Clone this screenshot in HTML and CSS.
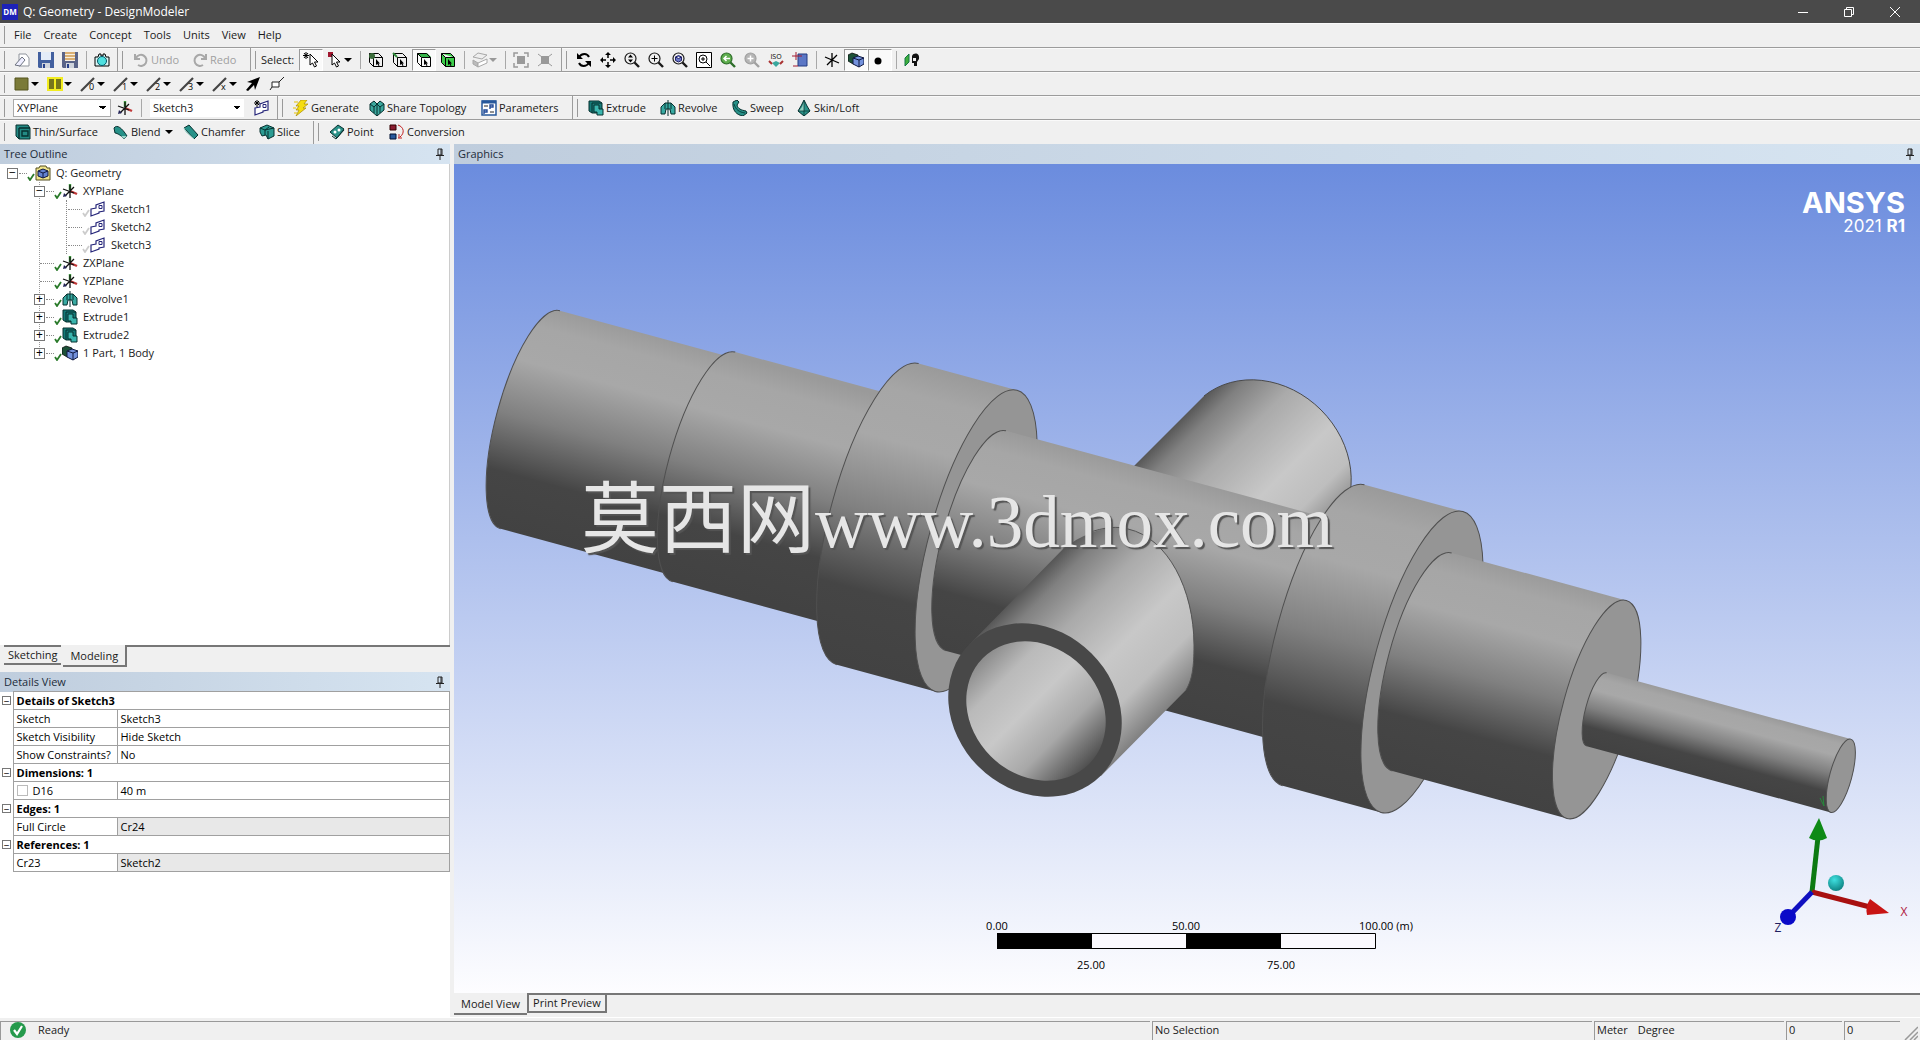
FILE: index.html
```html
<!DOCTYPE html>
<html lang="en">
<head>
<meta charset="utf-8">
<title>Q: Geometry - DesignModeler</title>
<link rel="stylesheet" href="styles.css">
</head>
<body>
<svg class="defs" aria-hidden="true">
  <symbol id="caret" viewBox="0 0 8 16"><path d="M0 6h8L4 10z"/></symbol>
  <symbol id="open" viewBox="0 0 16 16"><path d="M5 2h7l3 4v8H5z" fill="#fff" stroke="#8f949c"/><path d="M1 13 8 5l3 3-5 6z" fill="#eef" stroke="#6d7380"/></symbol>
  <symbol id="save" viewBox="0 0 16 16"><path d="M0 0h16v16H1l-1-1z" fill="#43609f"/><path d="M3 0h10v8H3z" fill="#e4ecf8"/><path d="M4 11h8v5H4z" fill="#cfd4dc"/><path d="M5 12h2v4H5z" fill="#27408b"/></symbol>
  <symbol id="saveas" viewBox="0 0 16 16"><path d="M0 0h16v16H1l-1-1z" fill="#5a6488"/><path d="M3 0h10v9H3z" fill="#f7efe0"/><path d="M3 1h10M3 4h10M3 7h10" stroke="#d09a50" stroke-width="1.4"/><path d="M4 11h8v5H4z" fill="#cfd4dc"/><path d="M5 12h2v4H5z" fill="#27408b"/></symbol>
  <symbol id="camera" viewBox="0 0 16 16"><path d="M1 5h3l1-3h2v2h2V2h2l1 3h3v9H1z" fill="#d8f4f4" stroke="#000"/><circle cx="8" cy="9" r="4.500" fill="#4fe0e0" stroke="#056"/></symbol>
  <symbol id="undo" viewBox="0 0 16 16"><path d="M2 2v5h5M3 6a5.500 5.500 0 1 1 2 7" fill="none" stroke="#a8a8a8" stroke-width="2"/></symbol>
  <symbol id="redo" viewBox="0 0 16 16"><path d="M14 2v5H9M13 6a5.500 5.500 0 1 0-2 7" fill="none" stroke="#a8a8a8" stroke-width="2"/></symbol>
  <symbol id="pick" viewBox="0 0 16 16"><path d="M3 0v7M0 3.500h6M1 1l4 5M5 1 1 6" stroke="#000"/><path d="M7 2v11l2.500-2 2 4 2-1-2-4H15z" fill="#fff" stroke="#000"/></symbol>
  <symbol id="boxpick" viewBox="0 0 16 16"><path d="M1 0h5v5H1z" fill="#a01830"/><path d="M5 2v11l2.500-2 2 4 2-1-2-4H13z" fill="#fff" stroke="#000"/></symbol>
  <symbol id="cube" viewBox="0 0 16 16"><path d="M1.500 1.500h9l4 4v9h-9l-4-4zM1.500 1.500l4 4h9M5.500 5.500v9" stroke="#000"/><path d="M8 7v6l1.500-1 1 2 1-.5-1-2H12z" fill="#000"/></symbol>
  <symbol id="iso3" viewBox="0 0 16 16"><path d="m1 5 5-4 9 2-5 4z" fill="#eee" stroke="#a8a8a8"/><path d="m1 8 5 3v4l-5-3z" fill="#bbb" stroke="#a8a8a8"/><path d="m6 11 9-4v4l-9 4z" fill="#fff" stroke="#a8a8a8"/></symbol>
  <symbol id="ext1" viewBox="0 0 16 16"><path d="M4 4h8v8H4z" fill="#999"/><path d="M1 5V1h4M11 1h4v4M15 11v4h-4M5 15H1v-4" fill="none" stroke="#999" stroke-width="1.500"/></symbol>
  <symbol id="ext2" viewBox="0 0 16 16"><path d="M4 4h8v8H4z" fill="#999"/><path d="m1 2 4 3M15 2l-4 3M15 14l-4-3M1 14l4-3" stroke="#999"/></symbol>
  <symbol id="rotate" viewBox="0 0 16 16"><path d="M3 5c3-4 8-4 10 0M13 11c-3 4-8 4-10 0" fill="none" stroke="#000" stroke-width="2"/><path d="M1 1v6h6zM15 15V9H9z"/></symbol>
  <symbol id="pan" viewBox="0 0 16 16"><path d="M8 3v3M8 10v3M3 8h3M10 8h3" stroke="#000" stroke-width="1.500"/><path d="M8 0l3 3H5zM8 16l3-3H5zM0 8l3-3v6zM16 8l-3-3v6z"/></symbol>
  <symbol id="lens" viewBox="0 0 16 16"><circle cx="6.500" cy="6.500" r="5.500" stroke="currentColor" stroke-width="1.200"/><path d="m10.500 10.500 4.500 4.500" stroke="currentColor" stroke-width="2.400"/></symbol>
  <symbol id="axes" viewBox="0 0 16 16"><path d="M8 7V1" stroke="#3a9a3a" stroke-width="2.400"/><path d="m8 8 7 3" stroke="#c03838" stroke-width="2.400"/><path d="M8 2v13M1 6l11 4M3 13l9-9" stroke="#111" stroke-width="1.300"/><path d="m1 14 1-4 3 3z" fill="#225"/></symbol>
  <symbol id="triad" viewBox="0 0 16 16"><path d="M8 1v14M1 5l14 6M3 13 13 3" stroke="#000" stroke-width="1.300"/></symbol>
  <symbol id="body" viewBox="0 0 16 16"><path d="M0 3 4 1l6 2v7l-5 2-5-3z" fill="#1d5138" stroke="#000" stroke-width=".7"/><path d="m5 6 5-2 6 2v6l-5 3-6-3z" fill="#7391dc" stroke="#101840"/><path d="m5 6 6 2 5-2M11 8v7" stroke="#101840" fill="none"/></symbol>
  <symbol id="sketch" viewBox="0 0 16 16"><path d="M1 8l5-1V4l8-3v9l-5 1v1l-8 3z" fill="#fff" stroke="#26267a" stroke-width="1.200"/><path d="M9 4.500h3v3H9z" fill="none" stroke="#26267a"/></symbol>
  <symbol id="extrude" viewBox="0 0 16 16"><path d="M1 1h10l3 2v10H4L1 11z" fill="#157a78" stroke="#06302f"/><path d="M4 3h10M4 3v10" stroke="#06302f"/><path d="M6 5h5v4h4v6H9v-3H6z" fill="#3ab5ae" stroke="#06302f"/></symbol>
  <symbol id="revolve" viewBox="0 0 16 16"><path d="M1 14V7l4-4h6l4 4v7h-4l-1-5H6l-1 5z" fill="#38aaa2" stroke="#06302f"/><path d="M8 0v16M5 3v6M11 3v6" stroke="#06302f"/></symbol>
  <symbol id="sweep" viewBox="0 0 16 16"><path d="M1 2l4-2 2 2-2 3c1 4 4 5 9 6l1 2-4 3C5 15 0 11 1 2z" fill="#279188" stroke="#06302f"/><path d="M2 4c2 6 5 8 11 9" fill="none" stroke="#07433f"/></symbol>
  <symbol id="skin" viewBox="0 0 16 16"><path d="M8 0l3 6 3 5-6 5-6-5 3-5z" fill="#2a9188" stroke="#06302f"/><path d="M8 2v9l-5 0 3-4z" fill="#8fd0c0"/><path d="M8 1v14M2 11h12" stroke="#06302f" stroke-width=".7"/></symbol>
  <symbol id="thin" viewBox="0 0 16 16"><path d="M1 1h12l2 3v11H4l-3-3z" fill="#238a85" stroke="#06302f"/><path d="M4 4h11M4 4v11M7 7h6v5H7z" fill="none" stroke="#06302f" stroke-width="1.400"/></symbol>
  <symbol id="blend" viewBox="0 0 16 16"><path d="M1 4c3-4 8 0 13 8l-3 3C9 12 4 9 2 9z" fill="#279188" stroke="#06302f"/><path d="M14 12H8l3 3z" fill="#9cd6cc"/></symbol>
  <symbol id="chamfer" viewBox="0 0 16 16"><path d="m1 4 5-3 9 10-4 4z" fill="#279188" stroke="#06302f"/><path d="m1 4 2 4 8 7" fill="none" stroke="#9cd6cc"/></symbol>
  <symbol id="slice" viewBox="0 0 16 16"><path d="m1 4 7-3 7 3v8l-6 3-2-4-4 1-2-4z" fill="#2c9b92" stroke="#06302f"/><path d="m1 4 5 2 9-2M6 6v5M9 7v8M6 6l4-3" stroke="#06302f" fill="none"/></symbol>
  <symbol id="point" viewBox="0 0 16 16"><path d="m1 8 8-7 6 4-7 9z" fill="#2a9188" stroke="#06302f"/><path d="m3 12 4 3 8-9" fill="none" stroke="#06302f"/><circle cx="6" cy="8" r="1.500" fill="#fff"/><circle cx="10" cy="6" r="1.500" fill="#fff"/></symbol>
  <symbol id="conv" viewBox="0 0 16 16"><path d="M1 1h6v5H1z" fill="#8a1c30" stroke="#300"/><path d="M1 10h6v5H1z" fill="#27589b" stroke="#013"/><path d="M9 1c6 2 7 8 2 12M9 14h4M10 14v-4" fill="none" stroke="#c02020"/></symbol>
  <symbol id="bolt" viewBox="0 0 16 16"><path d="M8 0h6l-3 4h4l-5 4h3L3 16l3-6H3l3-4H3z" fill="#f5dd10" stroke="#a98a00" stroke-width=".7"/><path d="M1 2h4M0 8h3M1 13h3" stroke="#e7c400"/></symbol>
  <symbol id="share" viewBox="0 0 16 16"><path d="m1 4 4-3 3 3 3-3 4 3v6l-7 6-7-6z" fill="#3ba79d" stroke="#06302f"/><path d="m1 4 4 3 3-3 3 3 4-3M8 4v12M5 7v6M11 7v6" fill="none" stroke="#06302f"/></symbol>
  <symbol id="param" viewBox="0 0 16 16"><path d="M1 1h14v14H1z" fill="#fff" stroke="#27589b" stroke-width="1.500"/><path d="M1 2h14" stroke="#27589b" stroke-width="3"/><path d="M3 6h4M9 12h4" stroke="#222"/><path d="M9 9V5h3v2H9M3 14v-4h3v2H3" fill="none" stroke="#214a98" stroke-width="1.400"/></symbol>
  <symbol id="check" viewBox="0 0 8 8"><path d="m1 4 2 3 4-6" fill="none" stroke="currentColor" stroke-width="1.800"/></symbol>
  <symbol id="geom" viewBox="0 0 16 16"><path d="M1 3h3l1-2h6l1 2h3v12H1z" fill="#efe48a" stroke="#554f20"/><path d="m3 6 5-2 5 2v5l-5 2-5-2z" fill="#6383d2" stroke="#101840"/><path d="m3 6 5 2 5-2M8 8v5" stroke="#101840" fill="none"/></symbol>
  <symbol id="pin" viewBox="0 0 8 12"><path d="M2 1h4v6H2zM0 7.500h8M4 8v4M5 1v6" fill="none" stroke="#222"/></symbol>
  <symbol id="edge" viewBox="0 0 16 16"><path d="M1 15 14 2" stroke="#444" stroke-width="2.200"/></symbol>
</svg>

<header class="titlebar">
  <svg class="app" viewBox="0 0 16 16"><path d="M0 0h16v16H0z" fill="#1d22b8"/><text x="8" y="11" text-anchor="middle" font-size="8" font-weight="700" fill="#fff">DM</text></svg>
  <h1>Q: Geometry - DesignModeler</h1>
  <div class="winbtns">
    <button aria-label="Minimize"><svg viewBox="0 0 12 12"><path d="M1 6.500h10" /></svg></button>
    <button aria-label="Restore"><svg viewBox="0 0 12 12"><path d="M1.500 3.500h7v7h-7zM3.500 3.500v-2h7v7h-2"/></svg></button>
    <button aria-label="Close"><svg viewBox="0 0 12 12"><path d="m1 1 10 10M11 1 1 11"/></svg></button>
  </div>
</header>

<nav class="bar menu"><i class="grip"></i>
  <a href="#">File</a><a href="#">Create</a><a href="#">Concept</a><a href="#">Tools</a><a href="#">Units</a><a href="#">View</a><a href="#">Help</a>
</nav>

<div class="bar" role="toolbar">
  <div class="band b-file"><i class="grip"></i>
    <button class="ib"><svg><use href="#open"/></svg></button><button class="ib"><svg><use href="#save"/></svg></button><button class="ib"><svg><use href="#saveas"/></svg></button><i class="sep"></i><button class="ib"><svg><use href="#camera"/></svg></button>
  </div>
  <div class="band b-undo"><i class="grip"></i>
    <button class="tb off"><svg><use href="#undo"/></svg>Undo</button><button class="tb off"><svg><use href="#redo"/></svg>Redo</button>
  </div>
  <div class="band b-select"><i class="grip"></i><span class="lbl">Select:</span>
    <button class="ib on"><svg><use href="#pick"/></svg></button><button class="db"><svg><use href="#boxpick"/></svg><svg class="car"><use href="#caret"/></svg></button><i class="sep"></i>
    <button class="ib"><svg fill="none"><use href="#cube"/><circle cx="4" cy="4" r="3" fill="#3c6e3c"/></svg></button><button class="ib"><svg fill="none"><use href="#cube"/><path d="m1 1 4 4" stroke="#2f8a3a" stroke-width="2"/></svg></button><button class="ib on"><svg fill="none"><path d="M1 1h10l4 4H5z" fill="#35b34a"/><use href="#cube"/></svg></button><button class="ib"><svg fill="#3ccc4a"><use href="#cube"/></svg></button><i class="sep"></i>
    <button class="db"><svg><use href="#iso3"/></svg><svg class="car dim"><use href="#caret"/></svg></button><i class="sep"></i>
    <button class="ib"><svg><use href="#ext1"/></svg></button><button class="ib"><svg><use href="#ext2"/></svg></button>
  </div>
  <div class="band open"><i class="grip"></i>
    <button class="ib"><svg><use href="#rotate"/></svg></button><button class="ib"><svg><use href="#pan"/></svg></button>
    <button class="ib"><svg fill="none"><use href="#lens"/><path d="m6.500 2.500 2.500 3H4zM6.500 10.500 9 7.500H4z" fill="#000"/></svg></button>
    <button class="ib"><svg fill="none"><use href="#lens"/><path d="M3.500 6.500h6M6.500 3.500v6" stroke="#000"/></svg></button>
    <button class="ib"><svg fill="none"><use href="#lens"/><path d="m3.500 5 3-1.500 3 1.500v3.500l-3 1.500-3-1.500zM3.500 5l3 1.500 3-1.500" fill="#6a78c8" stroke="#22226a"/></svg></button>
    <button class="ib"><svg><path d="M.5.5h15v15H.5z" fill="#fff" stroke="#000"/><circle cx="7" cy="7" r="4" fill="none" stroke="#000"/><path d="m10 10 4 4M5 7h4M7 5v4" stroke="#000"/></svg></button>
    <button class="ib"><svg fill="#5fae4e" color="#2e6e2a"><use href="#lens"/><path d="M10 6.500H4M6.500 4 4 6.500 6.500 9" stroke="#fff" stroke-width="1.500" fill="none"/></svg></button>
    <button class="ib"><svg fill="#b5b5b5" color="#a0a0a0"><use href="#lens"/><path d="M3.500 6.500h6M6.500 3.500v6" stroke="#fff" stroke-width="1.500"/></svg></button>
    <button class="ib"><svg class="iso"><text x="8" y="7" text-anchor="middle">ISO</text><path d="m8 9 4 2-4 4-4-4z" fill="#3aa79d"/><path d="m1 9 3 3M15 9l-3 3" stroke="#a33" stroke-width="2"/></svg></button>
    <button class="ib"><svg><path d="M6 2h9v12H6z" fill="#5b76c5" stroke="#223a80"/><path d="M0 4h10M4 0v8M1 14h5" stroke="#a01830"/></svg></button><i class="sep"></i>
    <button class="ib"><svg><use href="#triad"/></svg></button><button class="ib on"><svg><use href="#body"/></svg></button><button class="ib on"><svg><circle cx="6" cy="9" r="3.500"/></svg></button><i class="sep"></i>
    <button class="ib"><svg><path d="M1 6l4-4v8l-4 4z" fill="#3fae3c" stroke="#174"/><path d="M8 4c2-4 8-3 7 3l-2 3v4h-3v-3H8z" fill="#111"/><path d="M9 6h3v3H9z" fill="#eee"/></svg></button>
  </div>
</div>

<div class="bar" role="toolbar"><i class="grip"></i>
  <button class="db"><svg><path d="M1 2h13v12H1z" fill="#7a7a38" stroke="#55551f"/></svg><svg class="car"><use href="#caret"/></svg></button>
  <button class="db"><svg><path d="M0 1h16v14H0z" fill="#f2ec20"/><path d="M2 3h5v10H2zM9 3h5v10H9z" fill="#76761c"/></svg><svg class="car"><use href="#caret"/></svg></button>
  <button class="db"><svg><use href="#edge"/><text x="9" y="14">0</text></svg><svg class="car"><use href="#caret"/></svg></button>
  <button class="db"><svg><use href="#edge"/><text x="9" y="14">1</text></svg><svg class="car"><use href="#caret"/></svg></button>
  <button class="db"><svg><use href="#edge"/><text x="9" y="14">2</text></svg><svg class="car"><use href="#caret"/></svg></button>
  <button class="db"><svg><use href="#edge"/><text x="9" y="14">3</text></svg><svg class="car"><use href="#caret"/></svg></button>
  <button class="db"><svg><use href="#edge"/><text x="9" y="14">x</text></svg><svg class="car"><use href="#caret"/></svg></button>
  <button class="ib"><svg><path d="M15 1 2 6l5 1-6 7 2 1 6-6 1 5z"/></svg></button>
  <button class="ib"><svg><path d="M3 6h7v5H3zM10 6l5-5M3 11l-2 3" fill="#fff" stroke="#222"/></svg></button>
</div>

<div class="bar" role="toolbar">
  <div class="band b-plane"><i class="grip"></i>
    <select class="plane" aria-label="Plane"><option>XYPlane</option></select>
    <button class="ib"><svg><use href="#axes"/></svg></button><i class="sep"></i>
    <select class="sk" aria-label="Sketch"><option>Sketch3</option></select>
    <button class="ib"><svg><use href="#sketch"/><path d="M3 0v7M0 3h6M1 1l4 4M5 1 1 5" stroke="#000"/></svg></button>
  </div>
  <div class="band b-gen"><i class="grip"></i>
    <button class="tb w76"><svg><use href="#bolt"/></svg>Generate</button><button class="tb w112"><svg><use href="#share"/></svg>Share Topology</button><button class="tb"><svg><use href="#param"/></svg>Parameters</button>
  </div>
  <div class="band open"><i class="grip"></i>
    <button class="tb w72"><svg><use href="#extrude"/></svg>Extrude</button><button class="tb w72"><svg><use href="#revolve"/></svg>Revolve</button><button class="tb w64"><svg><use href="#sweep"/></svg>Sweep</button><button class="tb"><svg><use href="#skin"/></svg>Skin/Loft</button>
  </div>
</div>

<div class="bar last" role="toolbar">
  <div class="band b-thin"><i class="grip"></i>
    <button class="tb w98"><svg><use href="#thin"/></svg>Thin/Surface</button><button class="tb w70"><svg><use href="#blend"/></svg>Blend<svg class="car"><use href="#caret"/></svg></button><button class="tb w76"><svg><use href="#chamfer"/></svg>Chamfer</button><button class="tb"><svg><use href="#slice"/></svg>Slice</button>
  </div>
  <div class="band open"><i class="grip"></i>
    <button class="tb w60"><svg><use href="#point"/></svg>Point</button><button class="tb"><svg><use href="#conv"/></svg>Conversion</button>
  </div>
</div>

<main class="work">
  <aside class="side">
    <section class="outline">
      <h2 class="cap">Tree Outline<svg class="pin"><use href="#pin"/></svg></h2>
      <div class="treebox">
        <ul class="tree">
          <li><div class="node"><button class="ex" aria-label="Collapse">−</button><i class="dots"></i><svg class="ck"><use href="#check"/></svg><svg class="ic"><use href="#geom"/></svg>Q: Geometry</div>
            <ul class="l1">
              <li><div class="node"><button class="ex" aria-label="Collapse">−</button><i class="dots"></i><svg class="ck"><use href="#check"/></svg><svg class="ic"><use href="#axes"/></svg>XYPlane</div>
                <ul class="l2">
                  <li class="node"><i class="dots"></i><svg class="ck pale"><use href="#check"/></svg><svg class="ic"><use href="#sketch"/></svg>Sketch1</li>
                  <li class="node"><i class="dots"></i><svg class="ck pale"><use href="#check"/></svg><svg class="ic"><use href="#sketch"/></svg>Sketch2</li>
                  <li class="node"><i class="dots"></i><svg class="ck pale"><use href="#check"/></svg><svg class="ic"><use href="#sketch"/></svg>Sketch3</li>
                </ul></li>
              <li class="node leaf"><i class="dots"></i><svg class="ck"><use href="#check"/></svg><svg class="ic"><use href="#axes"/></svg>ZXPlane</li>
              <li class="node leaf"><i class="dots"></i><svg class="ck"><use href="#check"/></svg><svg class="ic"><use href="#axes"/></svg>YZPlane</li>
              <li class="node"><button class="ex" aria-label="Expand">+</button><i class="dots"></i><svg class="ck"><use href="#check"/></svg><svg class="ic"><use href="#revolve"/></svg>Revolve1</li>
              <li class="node"><button class="ex" aria-label="Expand">+</button><i class="dots"></i><svg class="ck"><use href="#check"/></svg><svg class="ic"><use href="#extrude"/></svg>Extrude1</li>
              <li class="node"><button class="ex" aria-label="Expand">+</button><i class="dots"></i><svg class="ck"><use href="#check"/></svg><svg class="ic"><use href="#extrude"/></svg>Extrude2</li>
              <li class="node"><button class="ex" aria-label="Expand">+</button><i class="dots"></i><svg class="ck"><use href="#check"/></svg><svg class="ic"><use href="#body"/></svg>1 Part, 1 Body</li>
            </ul></li>
        </ul>
      </div>
      <div class="tabs"><button class="tab">Sketching</button><button class="tab act">Modeling</button><i class="rest"></i></div>
    </section>
    <section class="details">
      <h2 class="cap">Details View<svg class="pin"><use href="#pin"/></svg></h2>
      <table>
        <colgroup><col class="c0"><col class="c1"><col></colgroup>
        <tr><td class="g"><button class="ex sm" aria-label="Collapse">−</button></td><th colspan="2">Details of Sketch3</th></tr>
        <tr><td class="g"></td><td>Sketch</td><td>Sketch3</td></tr>
        <tr><td class="g"></td><td>Sketch Visibility</td><td>Hide Sketch</td></tr>
        <tr><td class="g"></td><td>Show Constraints?</td><td>No</td></tr>
        <tr><td class="g"><button class="ex sm" aria-label="Collapse">−</button></td><th colspan="2">Dimensions: 1</th></tr>
        <tr><td class="g"></td><td><label><input type="checkbox">D16</label></td><td>40 m</td></tr>
        <tr><td class="g"><button class="ex sm" aria-label="Collapse">−</button></td><th colspan="2">Edges: 1</th></tr>
        <tr><td class="g"></td><td>Full Circle</td><td class="ro">Cr24</td></tr>
        <tr><td class="g"><button class="ex sm" aria-label="Collapse">−</button></td><th colspan="2">References: 1</th></tr>
        <tr><td class="g"></td><td>Cr23</td><td class="ro">Sketch2</td></tr>
      </table>
    </section>
  </aside>

  <section class="graphics">
    <h2 class="cap">Graphics<svg class="pin"><use href="#pin"/></svg></h2>
    <div class="view">
      <svg class="scene" viewBox="454 164 1466 829" role="img" aria-label="Valve body model">
        <defs>
          <linearGradient id="gBig" gradientUnits="userSpaceOnUse" x1="0" y1="-156" x2="0" y2="156"><stop offset="0" stop-color="#9a9a9a"/><stop offset=".1" stop-color="#a6a6a6"/><stop offset=".26" stop-color="#a8a8a8"/><stop offset=".5" stop-color="#808080"/><stop offset=".66" stop-color="#5a5a5a"/><stop offset=".75" stop-color="#454545"/><stop offset="1" stop-color="#424242"/></linearGradient>
          <linearGradient id="gMid" gradientUnits="userSpaceOnUse" x1="0" y1="-115" x2="0" y2="115"><stop offset="0" stop-color="#9a9a9a"/><stop offset=".1" stop-color="#a6a6a6"/><stop offset=".26" stop-color="#a8a8a8"/><stop offset=".5" stop-color="#808080"/><stop offset=".66" stop-color="#5a5a5a"/><stop offset=".75" stop-color="#454545"/><stop offset="1" stop-color="#424242"/></linearGradient>
          <linearGradient id="gRod" gradientUnits="userSpaceOnUse" x1="0" y1="-38" x2="0" y2="38"><stop offset="0" stop-color="#9a9a9a"/><stop offset=".1" stop-color="#a6a6a6"/><stop offset=".26" stop-color="#a8a8a8"/><stop offset=".5" stop-color="#808080"/><stop offset=".66" stop-color="#5a5a5a"/><stop offset=".75" stop-color="#454545"/><stop offset="1" stop-color="#424242"/></linearGradient>
          <linearGradient id="gPipe" gradientUnits="userSpaceOnUse" x1="969" y1="645" x2="1101" y2="776"><stop offset="0" stop-color="#585858"/><stop offset=".1" stop-color="#808080"/><stop offset=".3" stop-color="#aaa"/><stop offset=".58" stop-color="#c8c8c8"/><stop offset=".8" stop-color="#bebebe"/><stop offset="1" stop-color="#808080"/></linearGradient>
          <linearGradient id="gBack" gradientUnits="userSpaceOnUse" x1="1204" y1="396" x2="1335" y2="527"><stop offset="0" stop-color="#585858"/><stop offset=".1" stop-color="#808080"/><stop offset=".3" stop-color="#aaa"/><stop offset=".6" stop-color="#c8c8c8"/><stop offset=".8" stop-color="#bebebe"/><stop offset="1" stop-color="#808080"/></linearGradient>
          <linearGradient id="gBore" gradientUnits="userSpaceOnUse" x1="961" y1="711" x2="1111" y2="711"><stop offset="0" stop-color="#8c8c8c"/><stop offset=".2" stop-color="#bababa"/><stop offset=".45" stop-color="#c8c8c8"/><stop offset=".72" stop-color="#a8a8a8"/><stop offset="1" stop-color="#505050"/></linearGradient>
          <radialGradient id="gBall" cx=".4" cy=".3" r=".8"><stop offset="0" stop-color="#3fe0e0"/><stop offset="1" stop-color="#087878"/></radialGradient>
        </defs>
        <path d="M1134 466 1204 396A93 80 45 0 1 1335 527L1200 560Z" fill="url(#gBack)"/>
        <path d="M1204 396A93 80 45 0 1 1335 527" fill="none" stroke="#4a4a4a"/>
        <g transform="translate(1422 662) rotate(15.200)" stroke="#505050" stroke-width="1">
          <g stroke="none">
            <path d="M-924-113H-720V113H-924A34 113 0 0 1-924-113Z" fill="url(#gMid)"/>
            <path d="M-744-119H-540V119H-744A36 119 0 0 1-744-119Z" fill="url(#gMid)"/>
            <path d="M-564-156H-462V156H-564A47 156 0 0 1-564-156Z" fill="url(#gBig)"/>
          </g>
          <path d="M-924 113A34 113 0 0 1-924-113M-744 119A36 119 0 0 1-744-119M-564 156A47 156 0 0 1-564-156" fill="none"/>
          <ellipse cx="-462" cy="0" rx="47" ry="156" fill="#959595"/>
          <path d="M-462-114H-80V114H-462A34 114 0 0 1-462-114Z" fill="url(#gMid)" stroke="none"/>
          <path d="M-462 114A34 114 0 0 1-462-114" fill="none"/>
          <path d="M-102-156H0V156H-102A47 156 0 0 1-102-156Z" fill="url(#gBig)" stroke="none"/>
          <path d="M-102 156A47 156 0 0 1-102-156" fill="none"/>
          <ellipse cx="0" cy="0" rx="47" ry="156" fill="#959595"/>
          <path d="M0-113H181V113H0A34 113 0 0 1 0-113Z" fill="url(#gMid)" stroke="none"/>
          <path d="M0 113A34 113 0 0 1 0-113" fill="none"/>
          <ellipse cx="181" cy="0" rx="34" ry="113" fill="#959595"/>
          <path d="M181-38H434V38H181A11 38 0 0 1 181-38Z" fill="url(#gRod)" stroke="none"/>
          <path d="M181 38A11 38 0 0 1 181-38" fill="none"/>
          <ellipse cx="434" cy="0" rx="11" ry="38" fill="#959595"/>
        </g>
        <path d="M969 645 1063 549C1085 532 1110 524 1128 529C1168 538 1194 590 1194 645C1194 668 1192 680 1186 690L1101 776Z" fill="url(#gPipe)"/>
        <path d="M1088 533C1104 527 1118 526 1128 529C1168 538 1194 590 1194 645C1194 668 1192 680 1186 690" fill="none" stroke="#555"/>
        <ellipse cx="1035" cy="710" rx="93" ry="80" transform="rotate(45 1035 710)" fill="#484848"/>
        <ellipse cx="1036" cy="711" rx="75" ry="64" transform="rotate(45 1036 711)" fill="url(#gBore)"/>
        <text x="581" y="547" class="cjk">莫西网<tspan class="lat">www.3dmox.com</tspan></text>
        <g class="ruler">
          <path d="M997.500 933.500h378v15h-378z" fill="#fbfaff" stroke="#000"/>
          <path d="M997 933h95v16h-95zM1186 933h95v16h-95z"/>
          <text x="997" y="930" text-anchor="middle">0.00</text><text x="1186" y="930" text-anchor="middle">50.00</text><text x="1386" y="930" text-anchor="middle">100.00 (m)</text>
          <text x="1091" y="969" text-anchor="middle">25.00</text><text x="1281" y="969" text-anchor="middle">75.00</text>
        </g>
        <path d="M1820 798l4 8-1-10" stroke="#258a3a" fill="none"/>
        <path d="m1812 892 6-55" stroke="#0c7a12" stroke-width="5"/><path d="m1819 818 8 20q-9 5-18 0z" fill="#0e8a16"/>
        <path d="m1812 892 58 15" stroke="#a81010" stroke-width="5"/><path d="m1889 913-19-14q-5 8-3 16z" fill="#c81414"/>
        <path d="m1812 892-24 25" stroke="#1010c0" stroke-width="5"/><circle cx="1788" cy="917" r="8" fill="#0a0ac8"/>
        <circle cx="1836" cy="883" r="8" fill="url(#gBall)"/>
        <text x="1904" y="916" text-anchor="middle" class="ax" fill="#b02040">X</text><text x="1778" y="932" text-anchor="middle" class="ax" fill="#202060">Z</text>
      </svg>
      <div class="logo"><b>ANSYS</b><span>2021 <b>R1</b></span></div>
    </div>
    <div class="tabs low"><button class="tab act">Model View</button><button class="tab">Print Preview</button><i class="rest"></i></div>
  </section>
</main>

<footer class="status">
  <div class="ready"><svg viewBox="0 0 16 16"><circle cx="8" cy="8" r="8" fill="#259a4c"/><path d="m4 8 3 4 5-8" fill="none" stroke="#fff" stroke-width="2.200"/></svg>Ready</div>
  <div>No Selection</div><div class="units"><span>Meter</span><span>Degree</span></div><div>0</div><div>0</div>
  <svg class="size" viewBox="0 0 16 16"><path d="M3 16 16 3M8 16l8-8M12 16l4-4" stroke="#999" stroke-width="1.500"/></svg>
</footer>
</body>
</html>
```
FILE: styles.css
```css
* { box-sizing: border-box; }
body {
  margin: 0;
  height: 100vh;
  display: flex;
  flex-direction: column;
  overflow: hidden;
  background: #f0f0f0;
  color: #1a1a1a;
  font: 11px/16px "Open Sans", "Noto Sans", sans-serif;
}
.defs { position: absolute; width: 0; height: 0; }
button, select, input { font: inherit; color: inherit; margin: 0; }
button { border: 0; padding: 0; background: none; }
h1, h2 { margin: 0; font: inherit; }
ul { list-style: none; margin: 0; padding: 0; }
svg { flex: none; }

.titlebar { display: flex; align-items: center; height: 23px; background: #4a4a4a; color: #fff; padding-left: 2px; flex: none; }
.titlebar .app { width: 16px; height: 16px; margin-right: 5px; }
.titlebar h1 { font-size: 12px; }
.winbtns { margin-left: auto; display: flex; padding-right: 2px; }
.winbtns button { width: 46px; height: 20px; display: grid; place-items: center; }
.winbtns svg { width: 12px; height: 12px; fill: none; stroke: #fff; }

.bar { display: flex; align-items: center; height: 24px; flex: none; border-bottom: 1px solid #9c9c9c; box-shadow: inset 0 1px #fafafa; }
.bar.last { border-bottom: 0; }
.menu { height: 25px; gap: 12px; }
.menu .grip { margin-right: -3px; }
.menu a { color: inherit; text-decoration: none; }
.band { display: flex; align-items: center; height: 23px; border-right: 1px solid #9c9c9c; flex: none; }
.band.open { border-right: 0; }
.b-file { width: 118px; }
.b-undo { width: 133px; }
.b-select { width: 311px; }
.b-plane { width: 278px; }
.b-gen { width: 295px; }
.b-thin { width: 314px; }
.grip { width: 1px; height: 18px; margin: 0 5px 0 4px; background: #999; flex: none; }
.sep { width: 1px; height: 18px; margin: 0 3px 0 4px; background: #a8a8a8; flex: none; }
.lbl { width: 38px; }
.ib { width: 24px; height: 22px; display: grid; place-items: center; flex: none; }
.ib.on { background: #fafafa; border: 1px solid #999; border-right-color: #fff; border-bottom-color: #fff; }
.ib svg, .db svg, .tb svg { width: 16px; height: 16px; }
.iso { font-size: 7px; line-height: 8px; overflow: visible; }
.db { width: 33px; display: flex; gap: 1px; padding-left: 4px; flex: none; font-size: 9px; }
.db svg { overflow: visible; }
.db .car, .tb .car { width: 8px; }
.dim { fill: #999; }
.tb { display: flex; align-items: center; gap: 2px; padding-left: 5px; white-space: nowrap; flex: none; }
.tb .car { margin-left: 2px; }
.off { width: 59px; color: #a0a0a0; }
.w60 { width: 60px; }
.w64 { width: 64px; }
.w70 { width: 70px; }
.w72 { width: 72px; }
.w76 { width: 76px; }
.w98 { width: 98px; }
.w112 { width: 112px; }
select {
  appearance: none;
  height: 18px;
  padding: 0 3px;
  border: 0;
  border-radius: 0;
  background: conic-gradient(from 315deg at 50% 4px, #000 90deg, transparent 0) no-repeat right 3px center / 8px 4px #fff;
}
.plane { width: 98px; margin: 0 2px 0 3px; border: 1px solid #aaa; }
.sk { width: 94px; margin: 0 6px 0 5px; }

.work { flex: 1; min-height: 0; display: grid; grid-template-columns: 450px minmax(0, 1fr); gap: 4px; }
.side { display: flex; flex-direction: column; min-height: 0; background: #fff; }
.outline { display: flex; flex-direction: column; height: 528px; background: #f0f0f0; }
.cap { display: flex; align-items: center; justify-content: space-between; height: 20px; padding: 0 6px 0 4px; background: linear-gradient(90deg, #bfcddd, #d6e4f1); color: #222c3a; flex: none; }
.pin { width: 8px; height: 12px; }
.treebox { flex: 1; background: #fff; border-right: 1px solid #ccc; }
.tree { padding-left: 7px; }
.node { display: flex; align-items: center; height: 18px; }
.ex { width: 11px; height: 11px; border: 1px solid #777; background: #fff; font-size: 12px; line-height: 8px; color: #000; flex: none; }
.ex.sm { width: 9px; height: 9px; line-height: 6px; font-size: 10px; display: block; }
.dots { width: 8px; height: 1px; border-top: 1px dotted #888; margin-left: 1px; flex: none; }
.ck { width: 8px; height: 8px; margin-top: 7px; color: #2a7a2a; }
.pale { color: #ccc; }
.ic { width: 16px; height: 16px; margin-right: 5px; }
.l1 { padding-left: 27px; background: repeating-linear-gradient(#999 0 1px, #fff 1px 2px) no-repeat 32px 0 / 1px 172px; }
.l2 { margin-left: 32px; border-left: 1px dotted #888; height: 54px; }
.l2 .dots { width: 14px; }
.leaf .dots { width: 14px; margin-left: 6px; }

.tabs { display: flex; height: 27px; align-items: flex-start; background: #f0f0f0; flex: none; }
.tab { height: 20px; padding: 0 4px; border: 1px solid #777; border-width: 2px 0 2px 0; flex: none; }
.tab.act { height: 22px; padding: 2px 7px 0; border-width: 0 2px 2px 0; }
.rest { flex: 1; border-top: 2px solid #777; }
.outline .tab { margin-left: 4px; }
.outline .tab.act { margin-left: 2px; }
.low { height: 24px; }
.low .tab { border-width: 2px; }
.low .tab.act { border-width: 0 0 2px; }

.details { background: #fff; }
table { width: 100%; border-collapse: collapse; table-layout: fixed; color: #000; margin-top: -1px; }
.c0 { width: 13px; }
.c1 { width: 104px; }
td, th { height: 18px; padding: 0 3px; border: 1px solid #a0a0a0; font-weight: 400; text-align: left; line-height: 16px; white-space: nowrap; }
th { font-weight: 700; }
.g { border: 0; padding: 0 2px; }
.ro { background: #e8e8e8; }
label { display: flex; align-items: center; gap: 5px; }
input { appearance: none; width: 11px; height: 11px; border: 1px solid #bbb; background: #fff; }

.graphics { display: flex; flex-direction: column; min-width: 0; }
.view { flex: 1; min-height: 0; position: relative; background: linear-gradient(#6b8cde, #fdfdff); }
.scene { display: block; width: 100%; height: 100%; }
.cjk { font: 78px "Noto Sans CJK SC", sans-serif; fill: #e6e6e6; text-shadow: 2px 2px 1px #555; }
.lat { font: 73px "Liberation Serif", serif; }
.ruler { font-size: 11px; }
.ax { font-size: 12px; }
.logo { position: absolute; top: 23px; right: 15px; display: flex; flex-direction: column; align-items: flex-end; color: #fff; font: 17px/17px Inter, sans-serif; }
.logo > b { font-size: 29px; line-height: 31px; }

.status { display: grid; grid-template-columns: minmax(0, 1fr) 440px 190px 56px 56px 18px; gap: 2px; height: 23px; padding-top: 3px; border-top: 1px solid #fff; background: #f0f0f0; flex: none; }
.status > div { display: flex; align-items: center; border: 1px solid #999; border-width: 1px 0 0 1px; padding: 0 0 2px 2px; }
.status .ready { padding-left: 9px; gap: 12px; }
.ready svg, .size { width: 16px; height: 16px; }
.size { align-self: end; }
.units { gap: 10px; }
```
